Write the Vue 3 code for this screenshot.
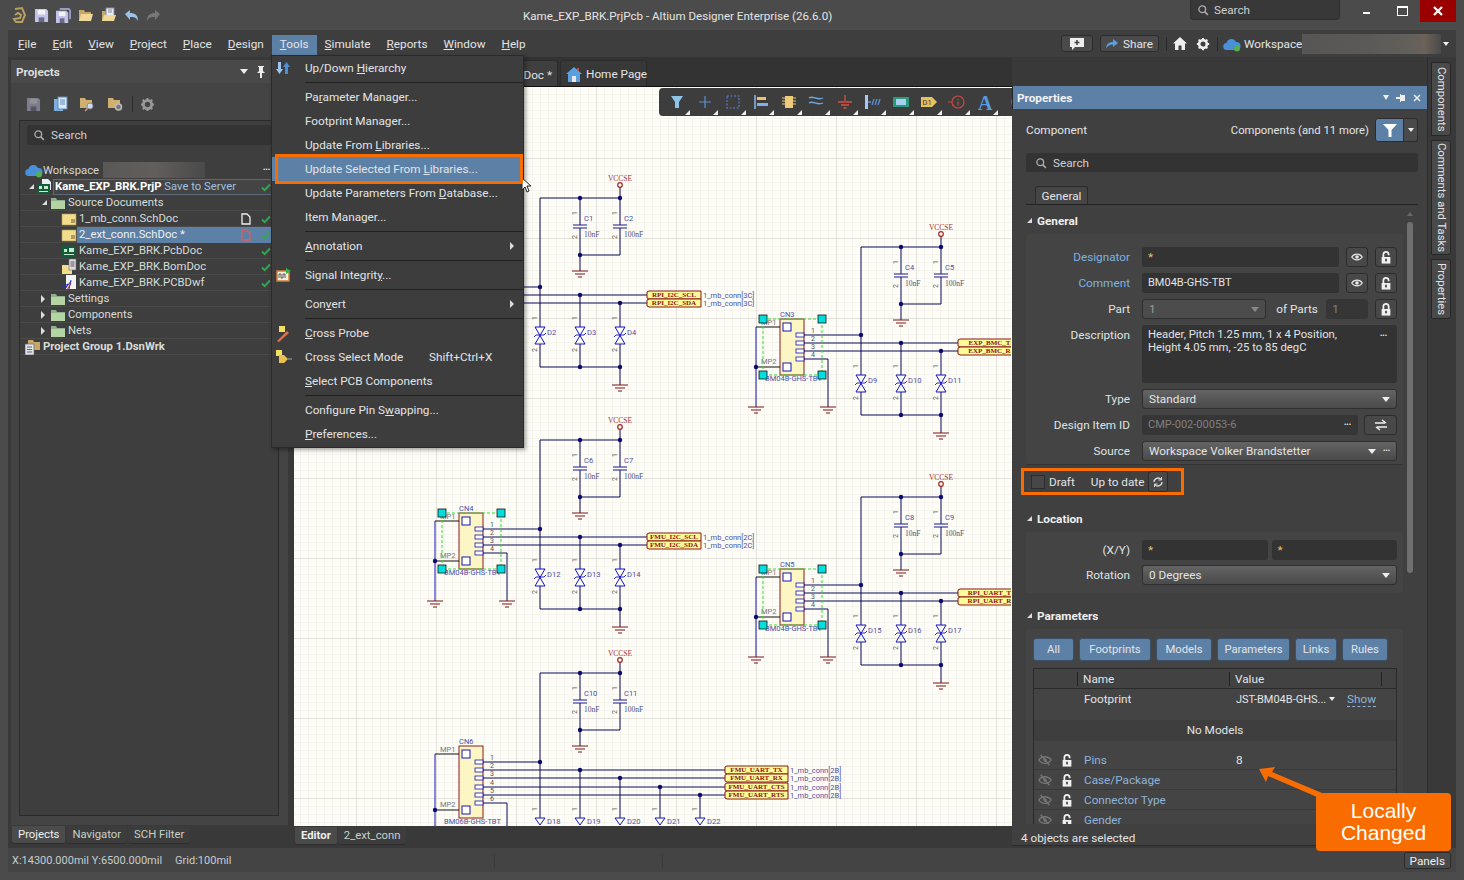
<template>
  <div class="app">
    <!-- shared icons -->
    <svg class="defs" width="0" height="0">
      <symbol id="i-search" viewBox="0 0 16 16"><circle cx="7" cy="7" r="4.5" fill="none" stroke="#aaa" stroke-width="1.8"/><path d="M10.5 10.5l4 4" stroke="#aaa" stroke-width="2"/></symbol>
      <symbol id="i-save" viewBox="0 0 16 16"><path fill="#c3c3ea" d="M1 1h12l2 2v12H1z"/><rect x="4" y="2" width="8" height="5" fill="#f2f2f2"/><rect x="5" y="10" width="6" height="5" fill="#6a6a8c"/></symbol>
      <symbol id="i-save-all" viewBox="0 0 16 16"><path fill="#9a9ac8" d="M4 0h10l2 2v10h-2V2H4z"/><path fill="#c3c3ea" d="M0 3h11l2 2v11H0z"/><rect x="3" y="4" width="7" height="4.500" fill="#f2f2f2"/><rect x="4" y="11" width="5" height="5" fill="#6a6a8c"/></symbol>
      <symbol id="i-folder" viewBox="0 0 16 16"><path fill="#c8a868" d="M1 3h5l1 2h6v9H1z"/><path fill="#f0d898" d="M3 7h12l-2 7H1z"/></symbol>
      <symbol id="i-folder-doc" viewBox="0 0 16 16"><path fill="#c8a868" d="M1 4h4l1 2h1v8H1z"/><rect x="5" y="1" width="8" height="8" fill="#e8eef4" stroke="#889"/><path d="M7 3h4M7 5h4" stroke="#889"/><path fill="#f0d898" d="M3 8h12l-2 6H1z"/></symbol>
      <symbol id="i-folder-green" viewBox="0 0 16 16"><path fill="#8fb088" d="M1 3h5l1 2h8v9H1z"/><rect x="1" y="6" width="14" height="8" fill="#b4d4a4"/></symbol>
      <symbol id="i-group" viewBox="0 0 16 16"><path fill="#c8a868" d="M3 1h5l1 2h6v8H3z"/><rect x="0" y="5" width="9" height="11" fill="#dfe4e8" stroke="#667" stroke-width=".7"/><path d="M2 8h5M2 10.500h5M2 13h5" stroke="#667"/></symbol>
      <symbol id="i-prj" viewBox="0 0 16 16"><path fill="#e8eef4" d="M5 0h6l3 3v8H5z"/><rect x="0" y="5" width="13" height="10" fill="#125c3a"/><path d="M2 7h3v3H2zM7 7h4v3H7zM2 12h9v1H2z" fill="#c8e8d0"/></symbol>
      <symbol id="i-gear" viewBox="0 0 16 16"><circle cx="8" cy="8" r="4.400" fill="none" stroke="currentColor" stroke-width="3"/><path d="M8 1v3M8 12v3M1 8h3M12 8h3M3 3l2 2M11 11l2 2M13 3l-2 2M5 11l-2 2" stroke="currentColor" stroke-width="2.200"/></symbol>
      <symbol id="i-eye" viewBox="0 0 16 16"><path d="M1 8c3-5 11-5 14 0c-3 5-11 5-14 0z" fill="none" stroke="#e8e8e8" stroke-width="1.600"/><circle cx="8" cy="8" r="2.400" fill="#e8e8e8"/></symbol>
      <symbol id="i-eye-off" viewBox="0 0 16 16"><path d="M1 8c3-5 11-5 14 0c-3 5-11 5-14 0z" fill="none" stroke="#777" stroke-width="1.500"/><circle cx="8" cy="8" r="2" fill="#777"/><path d="M3 2l10 12" stroke="#777" stroke-width="1.500"/></symbol>
      <symbol id="i-unlock" viewBox="0 0 16 16"><path d="M5 8V5a3 3 0 0 1 6 0v1" fill="none" stroke="#f0f0f0" stroke-width="2"/><path fill="#f0f0f0" d="M3 8h10v7.500H3z"/><rect x="7" y="10" width="2" height="3" fill="#444"/></symbol>
      <symbol id="i-lock" viewBox="0 0 16 16"><path d="M5 8V5a3 3 0 0 1 6 0v3" fill="none" stroke="#f0f0f0" stroke-width="2"/><path fill="#f0f0f0" d="M3 8h10v7.500H3z"/><rect x="7" y="10" width="2" height="3" fill="#444"/></symbol>
      <symbol id="i-cloud" viewBox="0 0 18 16"><path fill="#4a90d9" d="M4 14a3.500 3.500 0 0 1-.5-7A5 5 0 0 1 13 6a4 4 0 0 1 1 8z"/><circle cx="14" cy="12.500" r="3" fill="#55b04f"/></symbol>
      <symbol id="i-check" viewBox="0 0 10 10"><path d="M1 5.500l2.600 2.600L9 2.500" fill="none" stroke="#2fa84f" stroke-width="2"/></symbol>
      <symbol id="i-sch" viewBox="0 0 16 16"><rect x="1" y="3" width="14" height="11" fill="#f3dc8c" stroke="#b09a5a" stroke-width=".6"/><path d="M10 9h4M10 11h4" stroke="#6a5a2a"/></symbol>
      <symbol id="i-pcb" viewBox="0 0 16 16"><rect x="1" y="3" width="14" height="11" fill="#125c3a"/><path d="M3 6h3v3H3zM8 5h5v4H8zM3 11h10v1H3z" fill="#c8e8d0"/></symbol>
      <symbol id="i-bom" viewBox="0 0 16 16"><rect x="1" y="6" width="10" height="9" fill="#f3dc8c"/><rect x="8" y="0" width="7" height="11" fill="#ddd" stroke="#667" stroke-width=".6"/><path d="M9.500 3h4M9.500 5h4M9.500 7h4" stroke="#556"/></symbol>
      <symbol id="i-dwf" viewBox="0 0 16 16"><rect x="5" y="0" width="10" height="14" fill="#f4f4f4"/><path d="M1 12l6-3-3 5 6-8M8 14l2-9" stroke="#2030c0" fill="none"/><path d="M6 15l4-7" stroke="#d02020"/></symbol>
      <symbol id="i-corner" viewBox="0 0 5 5"><path d="M5 0v5H0z" fill="#eee"/></symbol>
    </svg>

    <!-- title bar -->
    <div class="title-bar">
      <div class="quick">
        <svg class="logo" width="16" height="18" viewBox="0 0 16 18"><path d="M4 3l7-1 3 7-3 7H5l-2-3 6-1 1-3-3-2-3 2" fill="none" stroke="#b8a060" stroke-width="2"/></svg>
        <svg class="qi" width="15" height="15"><use href="#i-save"/></svg>
        <svg class="qi" width="15" height="15"><use href="#i-save-all"/></svg>
        <svg class="qi" width="16" height="16"><use href="#i-folder"/></svg>
        <svg class="qi" width="16" height="16"><use href="#i-folder-doc"/></svg>
        <svg class="qi" width="15" height="13" viewBox="0 0 15 13"><path d="M1 5l5-4v3c5 0 8 2 8 8c-2-4-4-4-8-4v3z" fill="#9cc0e8"/></svg>
        <svg class="qi" width="15" height="13" viewBox="0 0 15 13"><path d="M14 5L9 1v3c-5 0-8 2-8 8c2-4 4-4 8-4v3z" fill="#777"/></svg>
      </div>
      <div class="title">Kame_EXP_BRK.PrjPcb - Altium Designer Enterprise (26.6.0)</div>
      <div class="top-search"><svg width="12" height="12"><use href="#i-search"/></svg><span>Search</span></div>
      <div class="win-btn"><i class="min"></i></div>
      <div class="win-btn"><i class="max"></i></div>
      <div class="win-btn close">
        <svg width="10" height="10" viewBox="0 0 10 10"><path d="M1 1l8 8M9 1l-8 8" stroke="#fff" stroke-width="2.200"/></svg>
      </div>
    </div>

    <!-- menu bar -->
    <div class="menu-bar">
      <span v-for="m in menus" :key="m.b" class="menu-name" :class="{ active: m.a === 'T' }"><u>{{ m.a }}</u>{{ m.b }}</span>
      <div class="menu-right">
        <div class="comment-btn">
          <svg width="16" height="14" viewBox="0 0 16 14"><path fill="#eee" d="M1 1h14v9H6l-3 3v-3H1z"/><path d="M8 3v5M5.500 5.500h5" stroke="#444" stroke-width="1.600"/></svg>
        </div>
        <div class="share-btn">
          <svg width="12" height="10" viewBox="0 0 12 10"><path d="M7 0l5 4-5 4V5.500C4 5.500 2 6.500 0 9c.5-4 3-6 7-6z" fill="#5aa0e0"/></svg>
          <span>Share</span>
        </div>
        <i class="bar-sep"></i>
        <svg class="home" width="14" height="13" viewBox="0 0 14 13"><path fill="#eee" d="M7 0l7 6.500h-2V13H8.500V8.500h-3V13H2V6.500H0z"/></svg>
        <svg class="cog" width="14" height="14"><use href="#i-gear"/></svg>
        <i class="bar-sep sep2"></i>
        <svg class="cloud" width="18" height="16"><use href="#i-cloud"/></svg>
        <span class="ws">Workspace</span>
        <div class="blur-name"></div>
        <i class="caret small"></i>
      </div>
    </div>

    <div class="main">
      <!-- projects panel -->
      <div class="left">
        <div class="panel-head">
          <b>Projects</b>
          <i class="caret"></i>
          <svg width="10" height="12" viewBox="0 0 10 12"><path fill="#eee" d="M2 0h6v1H7v4l2 2H6v5H4V7H1l2-2V1H2z"/></svg>
        </div>
        <div class="panel-body">
          <div class="panel-tools">
            <svg width="15" height="15" style="opacity:.45"><use href="#i-save"/></svg>
            <svg width="16" height="16" viewBox="0 0 16 16"><rect x="2" y="3" width="9" height="12" fill="#7fb0dd"/><rect x="6" y="1" width="9" height="12" fill="#dce8f4" stroke="#5a8abc"/><path d="M8 4h5M8 6h5M8 8h5" stroke="#5a8abc"/></svg>
            <svg width="17" height="16" viewBox="0 0 17 16"><path fill="#d0b070" d="M1 2h5l1 2h6v8H1z"/><circle cx="11" cy="10" r="3" fill="#cde" stroke="#889"/><path d="M9 12l-3 3" stroke="#b98" stroke-width="1.600"/></svg>
            <svg width="17" height="16" viewBox="0 0 17 16"><path fill="#d0b070" d="M1 2h5l1 2h6v8H1z"/><circle cx="11.500" cy="11" r="3" fill="#777" stroke="#bbb" stroke-width="1.500"/></svg>
            <i class="tool-sep"></i>
            <svg class="tool-gear" width="15" height="15"><use href="#i-gear"/></svg>
          </div>
          <div class="tree-box">
            <div class="tree-search">
              <svg width="12" height="12"><use href="#i-search"/></svg><span>Search</span>
            </div>
            <div class="tree">
              <div class="tree-row ws-row">
                <svg width="18" height="16"><use href="#i-cloud"/></svg>
                <span class="ws-text">Workspace</span>
                <div class="blur-name small"></div>
                <span class="more">•••</span>
              </div>
              <div v-for="r in treeRows" :key="r.label" class="tree-row" :style="{ paddingLeft: r.pad + 'px' }">
                <i v-if="r.arrow" class="tree-arrow" :class="r.arrow"></i>
                <svg class="tree-icon" width="16" height="16"><use :href="'#' + r.icon"/></svg>
                <span class="tree-label" :class="{ hl: r.hl, boxed: r.boxed, strong: r.bold }">
                  {{ r.label }}<em v-if="r.boxed"> Save to Server</em>
                  <svg v-if="r.doc" class="doc-mark" width="10" height="12" viewBox="0 0 10 12"><path d="M1 1h5l3 3v7H1z" fill="none" :stroke="r.hl ? '#d86060' : '#eee'" stroke-width="1.300"/></svg>
                  <svg v-if="r.check" class="check" width="10" height="10"><use href="#i-check"/></svg>
                </span>
              </div>
            </div>
          </div>
        </div>
        <div class="bottom-tabs">
          <span class="b-tab on">Projects</span><span class="b-tab">Navigator</span><span class="b-tab">SCH Filter</span>
        </div>
      </div>

      <!-- schematic editor -->
      <div class="editor">
        <div class="doc-tabs">
          <span class="doc-tab">2_ext_conn.SchDoc *</span>
          <span class="doc-tab home-tab">
            <svg width="16" height="15" viewBox="0 0 16 15"><path fill="#5aa0e0" d="M8 0l8 7h-2v8H2V7H0z"/><path fill="#e8e8e8" d="M6 9h4v6H6z"/><path fill="#d05040" d="M11 1h2v3l-2-1.500z"/></svg>
            Home Page
          </span>
        </div>
        <div class="canvas">
          <svg class="sheet" viewBox="294 87 717 739" width="717" height="739">
            <defs>
              <pattern id="minor" x="596" y="158" width="8" height="8" patternUnits="userSpaceOnUse">
                <path d="M0 0V8M0 0H8" stroke="#eeeee6" stroke-width="1" fill="none"/>
              </pattern>
              <pattern id="major" x="596" y="158" width="80" height="80" patternUnits="userSpaceOnUse">
                <path d="M0 0V80M0 0H80" stroke="#dbdbd3" stroke-width="1.400" fill="none"/>
              </pattern>
            </defs>
            <rect x="294" y="87" width="717" height="739" fill="#fdfcf6"/>
            <rect x="294" y="87" width="717" height="739" fill="url(#minor)"/>
            <rect x="294" y="87" width="717" height="739" fill="url(#major)"/>

            <!-- connectors -->
            <g v-for="c in connectors" :key="c.name">
              <rect :x="c.x" :y="c.y" width="24" :height="c.h" fill="#fbf6c4" stroke="#8b1a1a" stroke-width="1"/>
              <rect :x="c.x + 3" :y="c.y + 4" width="8" height="8" fill="#fff" stroke="#1414b4"/>
              <rect :x="c.x + 3" :y="c.y + c.h - 12" width="8" height="8" fill="#fff" stroke="#1414b4"/>
              <rect v-for="p in c.pins" :key="p" :x="c.x + 16" :y="p - 2" width="8" height="4" fill="#fff" stroke="#1414b4" stroke-width=".8"/>
              <text v-for="(p, i) in c.pins" :key="'n' + p" :x="c.x + 31" :y="p - 2" class="t-num">{{ i + 1 }}</text>
              <text :x="c.x" :y="c.y - 2" class="t-name">{{ c.name }}</text>
              <text :x="c.x - 19" :y="c.y + 6" class="t-mp">MP1</text>
              <text :x="c.x - 19" :y="c.y + c.h - 11" class="t-mp">MP2</text>
              <text :x="c.x - 15" :y="c.y + c.h + 6" class="t-name">{{ c.part }}</text>
            </g>

            <line v-for="(w, i) in wires" :key="'w' + i" :x1="w[0]" :y1="w[1]" :x2="w[2]" :y2="w[3]" :stroke="w[4] || '#0a0a5c'" stroke-width="1"/>

            <!-- capacitors -->
            <g v-for="p in plates" :key="p.x + '-' + p.y">
              <path :d="`M${p.x - 7} ${p.y}h14M${p.x - 7} ${p.y + 3}h14`" stroke="#1a1a8c" stroke-width="1.200"/>
            </g>
            <!-- VCC symbols -->
            <g v-for="v in vccs" :key="v.y">
              <circle :cx="v.x" :cy="v.y" r="2.300" fill="none" stroke="#a02828" stroke-width="1.200"/>
              <text :x="v.x" :y="v.y - 4" text-anchor="middle" class="t-vcc">VCCSE</text>
            </g>
            <!-- grounds -->
            <path v-for="g in grounds" :key="g[0] + '-' + g[1]" :d="`M${g[0] - 8} ${g[1]}h16M${g[0] - 5} ${g[1] + 3}h10M${g[0] - 2} ${g[1] + 6}h4`" stroke="#7c1414" stroke-width="1" fill="none"/>
            <!-- TVS diodes -->
            <g v-for="d in diodes" :key="d.name" :transform="`translate(${d.x} ${d.y})`">
              <path v-if="!d.half" d="M-5 0h10L-5 17h10z" fill="none" stroke="#1414c0" stroke-width="1"/>
              <path v-if="!d.half" d="M-6 10l2-2h8l2-2" fill="none" stroke="#1414c0" stroke-width=".9"/>
              <path v-else d="M-5 0h10L0 7z" fill="none" stroke="#1414c0" stroke-width="1"/>
              <text x="7" :y="d.half ? 6 : 8" class="t-name">{{ d.name }}</text>
              <text v-if="!d.half" x="-7" y="-7" class="t-num rot">1</text>
              <text v-if="!d.half" x="-7" y="25" class="t-num rot">2</text>
              <text v-else x="-7" y="-7" class="t-num rot">1</text>
            </g>
            <circle v-for="(d, i) in dots" :key="'d' + i" :cx="d[0]" :cy="d[1]" r="2.200" fill="#0a0a70"/>
            <!-- caps text -->
            <g v-for="t in capTexts" :key="t.name">
              <text :x="t.x + 4" :y="t.y" class="t-name">{{ t.name }}</text>
              <text :x="t.x + 4" :y="t.y + 16" class="t-val">{{ t.val }}</text>
              <text :x="t.x - 7" :y="t.y - 6" class="t-num rot">1</text>
              <text :x="t.x - 7" :y="t.y + 18" class="t-num rot">2</text>
            </g>
            <!-- ports -->
            <g v-for="p in ports" :key="p.text">
              <path :d="`M${p.x} ${p.y + 1}l2 -1h${p.w - 2}v8h-${p.w - 2}l-2 -1z`" fill="#fdfb9a" stroke="#8b1414" stroke-width="1"/>
              <text :x="p.x + p.w / 2" :y="p.y + 6.300" text-anchor="middle" class="t-port">{{ p.text }}</text>
              <text v-if="p.sheet" :x="p.x + p.w + 2" :y="p.y + 6.500" class="t-name">{{ p.sheet }}</text>
            </g>
            <!-- selection handles -->
            <g v-for="c in connectors" :key="'h' + c.name">
              <template v-if="c.selected">
                <rect :x="c.x - 17" :y="c.y" :width="c.h + 3" :height="c.h" fill="none" stroke="#30e030" stroke-width="1" stroke-dasharray="3 2"/>
                <rect v-for="q in handlesOf(c)" :key="q[0] + '-' + q[1]" :x="q[0] - 4" :y="q[1] - 4" width="8" height="8" fill="#00dede" stroke="#111" stroke-width=".8"/>
              </template>
            </g>
          </svg>

          <div class="float-bar">
            <span v-for="(ic, i) in toolIcons" :key="i" class="float-item">
              <svg width="18" height="16" viewBox="0 0 18 16" v-html="ic"></svg>
              <svg class="float-corner" width="5" height="5"><use href="#i-corner"/></svg>
            </span>
          </div>
        </div>
        <div class="bottom-tabs editor-tabs">
          <span class="b-tab on strong">Editor</span><span class="b-tab">2_ext_conn</span>
        </div>
      </div>

      <!-- properties panel -->
      <div class="props">
        <div class="props-head">
          <b>Properties</b>
          <i class="caret"></i>
          <svg width="10" height="8" viewBox="0 0 10 8"><path fill="#eee" d="M0 3h4V0h1v1h4v6H5v1H4V5H0z"/></svg>
          <svg width="8" height="8" viewBox="0 0 8 8"><path d="M1 1l6 6M7 1l-6 6" stroke="#eee" stroke-width="1.500"/></svg>
        </div>
        <div class="props-top">
          <div class="comp-row">
            <span>Component</span>
            <span class="comp-count">Components (and 11 more)</span>
            <div class="filter-btn">
              <svg width="14" height="13" viewBox="0 0 14 13"><path fill="#fff" d="M0 0h14L8.500 6v7h-3V6z"/></svg>
            </div>
            <div class="filter-split"><i class="caret small"></i></div>
          </div>
          <div class="prop-search"><svg width="12" height="12"><use href="#i-search"/></svg><span>Search</span></div>
          <div class="prop-tabs"><span class="prop-tab">General</span></div>
        </div>

        <div class="props-scroll">
          <div class="props-content">
            <div class="sec-head"><i class="sec-arrow"></i>General</div>
            <div class="group general">
              <div class="row">
                <label class="link">Designator</label>
                <div class="ctl">
                  <div class="input grow star">*</div>
                  <div class="sq"><svg width="14" height="12"><use href="#i-eye"/></svg></div>
                  <div class="sq"><svg width="14" height="14"><use href="#i-unlock"/></svg></div>
                </div>
              </div>
              <div class="row">
                <label class="link">Comment</label>
                <div class="ctl">
                  <div class="input grow code">BM04B-GHS-TBT</div>
                  <div class="sq"><svg width="14" height="12"><use href="#i-eye"/></svg></div>
                  <div class="sq"><svg width="14" height="14"><use href="#i-unlock"/></svg></div>
                </div>
              </div>
              <div class="row">
                <label>Part</label>
                <div class="ctl">
                  <div class="select dim part-sel">1<i class="caret gray"></i></div>
                  <span class="of-parts">of Parts</span>
                  <div class="input dim parts-num">1</div>
                  <div class="sq"><svg width="14" height="14"><use href="#i-lock"/></svg></div>
                </div>
              </div>
              <div class="row desc-row">
                <label>Description</label>
                <div class="textarea">
                  <span>Header, Pitch 1.25 mm, 1 x 4 Position,<br>Height 4.05 mm, -25 to 85 degC</span>
                  <span class="more">•••</span>
                </div>
              </div>
              <div class="row">
                <label>Type</label>
                <div class="select">Standard<i class="caret"></i></div>
              </div>
              <div class="row">
                <label>Design Item ID</label>
                <div class="ctl">
                  <div class="input grow dim code">CMP-002-00053-6<span class="more">•••</span></div>
                  <div class="sq wide">
                    <svg width="14" height="12" viewBox="0 0 14 12"><path d="M1 4h10M8 1l4 3M13 8H3M6 11L2 8" stroke="#eee" stroke-width="1.500" fill="none"/></svg>
                  </div>
                </div>
              </div>
              <div class="row">
                <label>Source</label>
                <div class="select">Workspace Volker Brandstetter<i class="caret src-caret"></i><span class="more">•••</span></div>
              </div>
            </div>

            <div class="draft-row">
              <i class="checkbox"></i>
              <span class="draft">Draft</span>
              <span>Up to date</span>
              <div class="sq refresh">
                <svg width="12" height="12" viewBox="0 0 12 12"><path d="M2 6a4 4 0 0 1 7-2.600M10 6a4 4 0 0 1-7 2.600" fill="none" stroke="#ddd" stroke-width="1.300"/><path d="M9.500 1v3h-3M2.500 11V8h3" fill="none" stroke="#ddd"/></svg>
              </div>
            </div>

            <div class="sec-head loc"><i class="sec-arrow"></i>Location</div>
            <div class="group location">
              <div class="row">
                <label>(X/Y)</label>
                <div class="ctl xy"><div class="input grow star">*</div><div class="input grow star">*</div></div>
              </div>
              <div class="row rot-row">
                <label>Rotation</label>
                <div class="select">0 Degrees<i class="caret"></i></div>
              </div>
            </div>

            <div class="sec-head par"><i class="sec-arrow"></i>Parameters</div>
            <div class="group params">
              <div class="chips">
                <span v-for="c in chips" :key="c" class="chip">{{ c }}</span>
              </div>
              <div class="table">
                <div class="t-row t-head"><span></span><span>Name</span><span>Value</span><span></span></div>
                <div class="t-row"><span></span><span>Footprint</span>
                  <span class="fp">JST-BM04B-GHS...<i class="caret small"></i></span>
                  <span></span>
                </div>
                <a class="show">Show</a>
                <div class="no-models">No Models</div>
                <div v-for="p in paramRows" :key="p.name" class="t-row p-row">
                  <span class="p-icons"><svg width="14" height="14"><use href="#i-eye-off"/></svg><svg width="14" height="14"><use href="#i-unlock"/></svg></span>
                  <span class="p-name">{{ p.name }}</span>
                  <span>{{ p.value }}</span>
                  <span></span>
                </div>
              </div>
            </div>
          </div>
          <div class="scroll-col">
            <i class="scroll-up"></i>
            <i class="thumb"></i>
          </div>
        </div>
        <div class="props-foot">4 objects are selected</div>
      </div>

      <!-- right side tabs -->
      <div class="rail">
        <span class="rail-tab comp">Components</span>
        <span class="rail-tab tasks">Comments and Tasks</span>
        <span class="rail-tab prop">Properties</span>
      </div>
    </div>

    <!-- status bar -->
    <div class="status">
      <span>X:14300.000mil Y:6500.000mil</span>
      <span class="grid">Grid:100mil</span>
      <i class="st-sep s1"></i>
      <i class="st-sep s2"></i>
      <span class="panels">Panels</span>
    </div>

    <!-- Tools dropdown -->
    <div class="dropdown">
      <template v-for="(m, i) in toolMenu" :key="i">
        <div v-if="m.sep" class="dd-sep"></div>
        <div v-else class="dd-item" :class="{ picked: m.picked }">
          <span class="dd-icon" v-if="m.icon" v-html="m.icon"></span>
          <span class="dd-text">{{ m.a }}<u>{{ m.u }}</u>{{ m.b }}</span>
          <span v-if="m.key" class="dd-key">{{ m.key }}</span>
          <i v-if="m.sub" class="dd-sub"></i>
        </div>
      </template>
    </div>

    <!-- mouse pointer over the menu edge -->
    <svg class="pointer" width="12" height="17" viewBox="0 0 12 17"><path d="M1 1v12l3-3 2 5 2-1-2-5h4z" fill="#fff" stroke="#222" stroke-width="1"/></svg>

    <!-- annotation -->
    <svg class="note-arrow" width="70" height="34" viewBox="1258 765 70 34"><path fill="#f96d00" d="M1259 769l16-2-3 5 50 21-5 4-49-21-2 6z"/></svg>
    <div class="callout">Locally<br>Changed</div>
  </div>
</template>

<script setup>
const menus = [
  { a: 'F', b: 'ile' }, { a: 'E', b: 'dit' }, { a: 'V', b: 'iew' }, { a: 'P', b: 'roject' },
  { a: 'P', b: 'lace' }, { a: 'D', b: 'esign' }, { a: 'T', b: 'ools' }, { a: 'S', b: 'imulate' },
  { a: 'R', b: 'eports' }, { a: 'W', b: 'indow' }, { a: 'H', b: 'elp' }
]

const treeRows = [
  { label: 'Kame_EXP_BRK.PrjP', pad: 7, arrow: 'open', icon: 'i-prj', boxed: true, bold: true, check: true },
  { label: 'Source Documents', pad: 20, arrow: 'open', icon: 'i-folder-green' },
  { label: '1_mb_conn.SchDoc', pad: 41, icon: 'i-sch', check: true, doc: true },
  { label: '2_ext_conn.SchDoc *', pad: 41, icon: 'i-sch', check: true, doc: true, hl: true },
  { label: 'Kame_EXP_BRK.PcbDoc', pad: 41, icon: 'i-pcb', check: true },
  { label: 'Kame_EXP_BRK.BomDoc', pad: 41, icon: 'i-bom', check: true },
  { label: 'Kame_EXP_BRK.PCBDwf', pad: 41, icon: 'i-dwf', check: true },
  { label: 'Settings', pad: 20, arrow: 'closed', icon: 'i-folder-green' },
  { label: 'Components', pad: 20, arrow: 'closed', icon: 'i-folder-green' },
  { label: 'Nets', pad: 20, arrow: 'closed', icon: 'i-folder-green' },
  { label: 'Project Group 1.DsnWrk', pad: 5, icon: 'i-group', bold: true }
]

const toolMenu = [
  { a: 'Up/Down ', u: 'H', b: 'ierarchy', icon: '<svg width="14" height="14" viewBox="0 0 14 14"><path fill="#9cc4ee" d="M2 1h3v7h2L3.500 13 0 8h2z"/><path fill="#4a90d9" d="M9 13h3V6h2L10.500 1 7 6h2z"/></svg>' },
  { sep: true },
  { a: 'Pa', u: 'r', b: 'ameter Manager...' },
  { a: 'Footprint Manager...' },
  { a: 'Update From ', u: 'L', b: 'ibraries...' },
  { a: 'Update Selected From ', u: 'L', b: 'ibraries...', picked: true },
  { a: 'Update Parameters From ', u: 'D', b: 'atabase...' },
  { a: 'Item Manager...' },
  { sep: true },
  { a: '', u: 'A', b: 'nnotation', sub: true },
  { sep: true },
  { a: 'Signal Integrit', u: 'y', b: '...', icon: '<svg width="16" height="14" viewBox="0 0 16 14"><rect x="1" y="3" width="12" height="10" fill="#f4f0e0" stroke="#d08030" stroke-width="1.500"/><path d="M3 10V6h2v4h2V6h2v4" stroke="#555" fill="none"/><path fill="#30b040" d="M10 0l5 3-5 3z"/></svg>' },
  { sep: true },
  { a: 'Con', u: 'v', b: 'ert', sub: true },
  { sep: true },
  { a: '', u: 'C', b: 'ross Probe', icon: '<svg width="14" height="16" viewBox="0 0 14 16"><rect x="3" y="0" width="6" height="6" fill="#f4e060"/><path d="M1 15l10-10 2 2L3 16z" fill="#d87050"/></svg>' },
  { a: 'Cross Select Mode', key: 'Shift+Ctrl+X', icon: '<svg width="16" height="14" viewBox="0 0 16 14"><rect x="0" y="0" width="6" height="6" fill="#f4e060"/><path d="M3 5h5l4 4-4 4H3z" fill="#eac050"/><path d="M12 9h4" stroke="#aaa"/></svg>' },
  { a: '', u: 'S', b: 'elect PCB Components' },
  { sep: true },
  { a: 'Configure Pin S', u: 'w', b: 'apping...' },
  { a: '', u: 'P', b: 'references...' }
]

const chips = ['All', 'Footprints', 'Models', 'Parameters', 'Links', 'Rules']
const paramRows = [
  { name: 'Pins', value: '8' },
  { name: 'Case/Package', value: '' },
  { name: 'Connector Type', value: '' },
  { name: 'Gender', value: '' }
]

const toolIcons = [
  '<path fill="#8fc4e8" d="M3 2h12L11 8v6H7V8z"/>',
  '<path d="M9 2v12M3 8h12" stroke="#5a90d8" stroke-width="1.200"/>',
  '<rect x="3" y="2" width="12" height="12" fill="none" stroke="#5a7cd0" stroke-width="1.200" stroke-dasharray="2 1.500"/>',
  '<path d="M3 1v14" stroke="#8fb8e8" stroke-width="1.500"/><rect x="5" y="3" width="9" height="3" fill="#f0c070"/><rect x="5" y="9" width="11" height="3" fill="#7fb0e8"/>',
  '<rect x="5" y="2" width="8" height="12" fill="#eecb7a"/><path d="M2 4h3M2 7h3M2 10h3M13 4h3M13 7h3M13 10h3" stroke="#eecb7a"/>',
  '<path d="M1 4c4-3 8 3 14 0M1 9c4-3 8 3 14 0" stroke="#6ea8e0" fill="none" stroke-width="1.300"/>',
  '<path d="M9 1v6M2 8h14M5 11h8M7.500 14h3" stroke="#d85040" stroke-width="1.300"/>',
  '<rect x="1" y="1" width="3" height="14" fill="#a8c8f0"/><path d="M4 8h3M8 11l2-6M11 11l2-6M14 11l2-6" stroke="#5a90d8" stroke-width="1.300"/>',
  '<rect x="1" y="3" width="16" height="10" fill="#2a9a7a"/><rect x="4" y="5" width="10" height="6" fill="#a8d0f0"/>',
  '<path fill="#e8c060" d="M1 3h11l5 5-5 5H1z"/><text x="2.500" y="11" font-size="7.500" font-family="Roboto" fill="#333">D1</text>',
  '<circle cx="10" cy="8" r="6" fill="none" stroke="#c84a40" stroke-width="1.200"/><path d="M10 5v1M10 7.500v4M0 8h4" stroke="#c84a40" stroke-width="1.200"/>',
  '<text x="2" y="16" font-size="20" font-family="Liberation Serif" font-weight="700" fill="#5a9ae0">A</text>',
  '<path d="M14 2c-4 0-6 3-6 6s2 6 6 6" stroke="#4a8ac8" fill="none" stroke-width="1.500"/>'
]

// schematic geometry, all coordinates are page pixels
const wires = []
const dots = []
const grounds = []
const plates = []
const vccs = []
const diodes = []
const capTexts = []

function capGroup (x, top, c1, c2) {
  const a = x + 40
  const b = x + 80
  wires.push([x, top, b, top], [a, top, a, top + 27], [b, top, b, top + 27])
  wires.push([a, top + 30, a, top + 73], [b, top + 30, b, top + 57], [a, top + 57, b, top + 57])
  wires.push([b, top - 11, b, top])
  dots.push([a, top], [b, top], [a, top + 57])
  plates.push({ x: a, y: top + 27 }, { x: b, y: top + 27 })
  grounds.push([a, top + 73])
  vccs.push({ x: b, y: top - 13 })
  capTexts.push({ name: c1, val: '10nF', x: a, y: top + 23 }, { name: c2, val: '100nF', x: b, y: top + 23 })
}

function tvsRow (x, pin, names) {
  names.forEach((name, i) => diodes.push({ name, x: x + i * 40, y: pin + 40 }))
  wires.push([x + 40, pin + 8, x + 40, pin + 40], [x + 80, pin + 16, x + 80, pin + 40])
  names.forEach((n, i) => wires.push([x + i * 40, pin + 57, x + i * 40, pin + 80]))
  wires.push([x, pin + 80, x + 80, pin + 80], [x + 80, pin + 80, x + 80, pin + 98])
  dots.push([x, pin], [x + 40, pin + 8], [x + 80, pin + 16], [x + 40, pin + 80], [x + 80, pin + 80])
  grounds.push([x + 80, pin + 98])
}

function connector (x, y, name, part, count, selected) {
  const h = count === 6 ? 72 : 56
  const pins = Array.from({ length: count }, (_, i) => y + 16 + i * 8 + (i > 2 && count === 6 ? 1 : 0))
  const lx = x - 24
  const last = pins[count - 1]
  const bottom = count === 6 ? 860 : y + 88
  wires.push([lx, y + 8, x, y + 8, '#111'], [lx, y + h - 8, x, y + h - 8, '#111'])
  wires.push([lx, y + 8, lx, bottom, '#1414c0'])
  wires.push([x + 24, last, x + 48, last], [x + 48, last, x + 48, bottom])
  dots.push([lx, y + h - 8])
  if (count === 4) grounds.push([lx, bottom], [x + 48, bottom])
  return { x, y, h, name, part, pins, selected }
}

const connectors = [
  connector(780, 319, 'CN3', 'BM04B-GHS-TBT', 4, true),
  connector(459, 513, 'CN4', 'BM04B-GHS-TBT', 4, true),
  connector(780, 569, 'CN5', 'BM04B-GHS-TBT', 4, true),
  connector(459, 746, 'CN6', 'BM06B-GHS-TBT', 6, false)
]

const handlesOf = (c) => [
  [c.x - 17, c.y], [c.x + 42, c.y], [c.x - 17, c.y + c.h], [c.x + 42, c.y + c.h]
]

capGroup(540, 198, 'C1', 'C2')
capGroup(861, 247, 'C4', 'C5')
capGroup(540, 440, 'C6', 'C7')
capGroup(861, 497, 'C8', 'C9')
capGroup(540, 673, 'C10', 'C11')

tvsRow(540, 287, ['D2', 'D3', 'D4'])
tvsRow(861, 335, ['D9', 'D10', 'D11'])
tvsRow(540, 529, ['D12', 'D13', 'D14'])
tvsRow(861, 585, ['D15', 'D16', 'D17'])

// long rails from each cap group down to its first diode
wires.push([540, 198, 540, 327], [861, 247, 861, 375], [540, 440, 540, 569], [861, 497, 861, 625], [540, 673, 540, 818])
// nets of the hidden connector and of the three visible ones
wires.push([500, 287, 540, 287], [500, 295, 647, 295], [500, 303, 647, 303])
wires.push([804, 335, 861, 335], [804, 343, 960, 343], [804, 351, 960, 351])
wires.push([483, 529, 540, 529], [483, 537, 647, 537], [483, 545, 647, 545])
wires.push([804, 585, 861, 585], [804, 593, 960, 593], [804, 601, 960, 601])
wires.push([483, 762, 540, 762], [483, 770, 725, 770], [483, 778, 725, 778], [483, 787, 725, 787], [483, 795, 725, 795])
;[[580, 770], [620, 778], [660, 787], [700, 795]].forEach(([x, y]) => {
  wires.push([x, y, x, 818])
  dots.push([x, y])
})
dots.push([540, 762])
;['D18', 'D19', 'D20', 'D21', 'D22'].forEach((name, i) => diodes.push({ name, x: 540 + i * 40, y: 818, half: true }))

const ports = [
  { x: 647, y: 291, w: 54, text: 'RPI_I2C_SCL', sheet: '1_mb_conn[3C]' },
  { x: 647, y: 299, w: 54, text: 'RPI_I2C_SDA', sheet: '1_mb_conn[3C]' },
  { x: 958, y: 339, w: 68, text: 'EXP_BMC_TX' },
  { x: 958, y: 347, w: 68, text: 'EXP_BMC_RX' },
  { x: 647, y: 533, w: 54, text: 'FMU_I2C_SCL', sheet: '1_mb_conn[2C]' },
  { x: 647, y: 541, w: 54, text: 'FMU_I2C_SDA', sheet: '1_mb_conn[2C]' },
  { x: 958, y: 589, w: 68, text: 'RPI_UART_TX' },
  { x: 958, y: 597, w: 68, text: 'RPI_UART_RX' },
  { x: 725, y: 766, w: 63, text: 'FMU_UART_TX', sheet: '1_mb_conn[2B]' },
  { x: 725, y: 774, w: 63, text: 'FMU_UART_RX', sheet: '1_mb_conn[2B]' },
  { x: 725, y: 783, w: 63, text: 'FMU_UART_CTS', sheet: '1_mb_conn[2B]' },
  { x: 725, y: 791, w: 63, text: 'FMU_UART_RTS', sheet: '1_mb_conn[2B]' }
]
</script>

<style>
html, body { margin: 0; background: #4b4b4b; }
</style>

<style scoped>
.app {
  position: relative;
  width: 1464px;
  height: 880px;
  overflow: hidden;
  display: flex;
  flex-direction: column;
  background: #4b4b4b;
  color: #e2e4e6;
  font: 11.75px Roboto, "Liberation Sans", sans-serif;
}
.defs { position: absolute; }
i { display: block; font-style: normal; }
u { text-underline-offset: 1px; }

.caret {
  width: 0;
  height: 0;
  border-left: 4px solid transparent;
  border-right: 4px solid transparent;
  border-top: 5px solid #eee;
}
.caret.small { border-left-width: 3px; border-right-width: 3px; border-top-width: 4px; }
.caret.gray { border-top-color: #888; }
.more { font-size: 7px; letter-spacing: 0; color: #eee; }

/* title bar */
.title-bar { height: 30px; display: flex; align-items: flex-start; flex: none; }
.quick { width: 523px; height: 30px; display: flex; align-items: center; flex: none; }
.logo { margin-left: 11px; }
.qi { margin-left: 7px; }
.title { margin-top: 9px; width: 667px; font-size: 11.6px; color: #e4e4e4; white-space: nowrap; }
.top-search {
  width: 150px;
  height: 20px;
  box-sizing: border-box;
  padding-left: 6px;
  display: flex;
  align-items: center;
  gap: 5px;
  background: #383838;
  border: 1px solid #2f2f2f;
  border-top: 0;
  border-radius: 0 0 4px 4px;
  margin-right: 8px;
  color: #cfcfcf;
}
.win-btn { width: 36px; height: 22px; display: flex; align-items: center; justify-content: center; }
.win-btn.close { background: #9a0000; margin-right: 8px; }
.min { width: 7px; height: 2px; background: #fff; margin-top: 4px; }
.max { width: 9px; height: 7px; border: 1px solid #fff; border-top-width: 2px; }

/* menu bar */
.menu-bar {
  height: 27px;
  flex: none;
  margin: 0 8px;
  padding-left: 10px;
  display: flex;
  align-items: center;
  gap: 16px;
  background: #3e3e3e;
  box-sizing: border-box;
}
.menu-name { white-space: nowrap; }
.menu-name.active {
  background: #5d80a6;
  padding: 0 8px;
  margin: 0 -8px;
  line-height: 18px;
  align-self: flex-end;
  height: 22px;
}
.menu-right { margin-left: auto; padding-right: 7px; display: flex; align-items: center; gap: 0; }
.comment-btn, .share-btn {
  height: 17px;
  box-sizing: border-box;
  border: 1px solid #2c2c2c;
  border-radius: 3px;
  background: #4a4a4a;
  display: flex;
  align-items: center;
  justify-content: center;
}
.comment-btn { width: 32px; }
.share-btn { width: 59px; margin-left: 7px; gap: 5px; }
.bar-sep { width: 1px; height: 14px; background: #2a2a2a; margin-left: 7px; }
.home { margin-left: 6px; }
.cog { margin-left: 9px; color: #eee; }
.sep2 { margin-left: 7px; }
.cloud { margin-left: 5px; }
.ws { margin-left: 3px; width: 58px; }
.blur-name {
  width: 139px;
  height: 20px;
  margin-right: 2px;
  background: linear-gradient(90deg, #585654, #5c5a58 50%, #64605a 80%, #6c6258 88%, #4a4a4a);
}

/* layout */
.main { flex: 1; min-height: 0; margin: 0 8px; display: flex; background: #393939; }

/* projects panel */
.left { width: 277px; margin: 3px 6px 0 3px; flex: none; display: flex; flex-direction: column; min-height: 0; }
.panel-head {
  height: 23px;
  flex: none;
  background: #494949;
  display: flex;
  align-items: center;
  padding: 0 22px 0 5px;
  gap: 8px;
  line-height: 20px;
}
.panel-head b { flex: 1; font-weight: 700; color: #ddd; }
.panel-body { flex: 1; min-height: 0; background: #444; padding: 0 9px 9px 8px; display: flex; flex-direction: column; }
.panel-tools {
  height: 37px;
  flex: none;
  display: flex;
  align-items: center;
  padding: 5px 0 0 7px;
  gap: 11px;
  box-sizing: border-box;
}
.tool-sep { width: 1px; height: 16px; background: #2a2a2a; margin: 0 -4px 0 -3px; }
.tool-gear { color: #999; }
.tree-box { flex: 1; border: 1px solid #2a2a2a; background: #3e3e3e; padding-top: 4px; }
.tree-search {
  margin-left: 7px;
  height: 20px;
  background: #333;
  border-radius: 3px;
  display: flex;
  align-items: center;
  padding-left: 6px;
  gap: 6px;
  color: #cfcfcf;
}
.tree { margin-top: 17px; font-size: 11.3px; }
.tree-row {
  height: 16px;
  display: flex;
  align-items: center;
  box-sizing: border-box;
  border-bottom: 1px solid #4a4a4a;
  white-space: nowrap;
}
.ws-row { padding-left: 5px; border: 0; margin-bottom: 1px; }
.ws-text { width: 60px; color: #d6d6d6; }
.blur-name.small { width: 102px; height: 16px; background: linear-gradient(90deg, #5a5856, #625e5c 50%, #4a4a4a); margin: 0; }
.ws-row .more { margin-left: 58px; }
.tree-arrow { width: 10px; flex: none; height: 6px; position: relative; }
.tree-arrow.open::after {
  content: '';
  position: absolute;
  left: 2px;
  top: 0;
  border-bottom: 5px solid #ddd;
  border-left: 5px solid transparent;
}
.tree-arrow.closed::after {
  content: '';
  position: absolute;
  left: 1px;
  top: -1px;
  border-left: 4px solid #ddd;
  border-top: 4px solid transparent;
  border-bottom: 4px solid transparent;
}
.tree-icon { flex: none; }
.tree-label {
  flex: 1;
  height: 16px;
  line-height: 15px;
  padding-left: 2px;
  display: flex;
  align-items: center;
  color: #d8dcd8;
  min-width: 0;
  white-space: pre;
}
.tree-label.strong { font-weight: 700; }
.tree-label.hl { background: #5d80a6; color: #f0f0f0; }
.tree-label.boxed { outline: 1px solid #5a6a7a; outline-offset: -1px; background: #444; color: #fff; }
.tree-label em { font-style: normal; font-weight: 400; color: #9cc0e0; }
.doc-mark { position: absolute; left: 241px; }
.check { position: absolute; left: 261px; }

.bottom-tabs { height: 23px; flex: none; display: flex; gap: 1px; margin-left: 1px; box-sizing: border-box; padding-top: 1px; font-size: 11.3px; }
.b-tab {
  height: 17px;
  padding: 0 6px;
  line-height: 17px;
  background: #3c3c3c;
  border: 1px solid #2d2d2d;
  border-top: 0;
  border-radius: 0 0 3px 3px;
  color: #c8d0c8;
  box-sizing: content-box;
  border-width: 0 0 1px;
}
.b-tab.on { background: #4b4b4b; color: #f0f0f0; }
.b-tab.strong { font-weight: 700; }

/* editor */
.editor { width: 718px; flex: none; display: flex; flex-direction: column; min-height: 0; }
.doc-tabs { height: 30px; flex: none; display: flex; align-items: flex-start; background: #333; gap: 1px; padding-left: 120px; box-sizing: border-box; }
.doc-tab {
  height: 27px;
  margin-top: 3px;
  padding: 0 5px;
  line-height: 28px;
  background: #3f3f3f;
  border: 1px solid #2c2c2c;
  border-bottom: 0;
  border-radius: 3px 3px 0 0;
  width: 144px;
  box-sizing: border-box;
  text-align: right;
  white-space: nowrap;
}
.home-tab {
  width: 87px;
  margin-left: 1px;
  display: flex;
  align-items: center;
  gap: 4px;
  background: #383838;
}
.home-tab svg { flex: none; }
.canvas { position: relative; height: 739px; flex: none; overflow: hidden; background: #fdfcf6; border-top: 1px solid #111; margin-top: -1px; }
.sheet { display: block; }
.float-bar {
  position: absolute;
  left: 365px;
  top: 1px;
  width: 360px;
  height: 28px;
  padding-left: 4px;
  display: flex;
  background: #3d3d3d;
  border-radius: 4px;
  box-sizing: border-box;
}
.float-item { position: relative; width: 28px; flex: none; display: flex; align-items: center; justify-content: center; }
.float-corner { position: absolute; right: 1px; bottom: 1px; }
.t-name { font: 7.5px Roboto, sans-serif; fill: #4f4fa6; }
.t-val { font: 7.5px "Liberation Serif", serif; fill: #50507a; }
.t-num { font: 7px Roboto, sans-serif; fill: #555; }
.t-num.rot { transform-box: fill-box; transform-origin: center; transform: rotate(-90deg); fill: #666; }
.t-mp { font: 7.5px Roboto, sans-serif; fill: #777; }
.t-vcc { font: 7.5px "Liberation Serif", serif; fill: #a83232; }
.t-port { font: 700 7px "Liberation Serif", serif; fill: #8b1414; }
.editor-tabs { margin-left: 1px; height: 22px; }
.editor-tabs .b-tab { background: #3d3d3d; }
.editor-tabs .b-tab.on { background: #4a4a4a; }

/* properties */
.props {
  width: 415px;
  flex: none;
  margin-top: 29px;
  margin-bottom: 2px;
  background: #404040;
  display: flex;
  flex-direction: column;
  min-height: 0;
  box-sizing: border-box;
  border-bottom: 1px solid #2b2b2b;
  position: relative;
}
.props-head {
  height: 23px;
  flex: none;
  background: #5d80a6;
  display: flex;
  align-items: center;
  padding: 0 6px 0 4px;
  gap: 7px;
  border-left: 1px solid #222;
  box-sizing: border-box;
}
.props-head b { flex: 1; font-weight: 700; color: #f2f2f2; }
.props-head .caret { border-left-width: 3.5px; border-right-width: 3.5px; border-top-width: 5px; }
.props-top { padding: 9px 9px 0 14px; flex: none; }
.comp-row { height: 24px; display: flex; align-items: center; }
.comp-count { margin-left: auto; margin-right: 6px; font-size: 11.3px; }
.filter-btn {
  width: 29px;
  height: 24px;
  display: flex;
  align-items: center;
  justify-content: center;
  background: #5d80a6;
  border: 1px solid #2c2c2c;
  box-sizing: border-box;
  border-radius: 3px 0 0 3px;
}
.filter-split {
  width: 14px;
  height: 24px;
  box-sizing: border-box;
  display: flex;
  align-items: center;
  justify-content: center;
  background: #4a4a4a;
  border: 1px solid #2c2c2c;
  border-left: 0;
  border-radius: 0 3px 3px 0;
}
.prop-search {
  margin-top: 11px;
  height: 19px;
  background: #333;
  border-radius: 3px;
  display: flex;
  align-items: center;
  padding-left: 9px;
  gap: 6px;
  color: #cfcfcf;
}
.prop-tabs { margin-top: 14px; height: 19px; border-bottom: 1px solid #222; padding-left: 9px; box-sizing: border-box; }
.prop-tab {
  display: block;
  width: 53px;
  height: 18px;
  line-height: 19px;
  text-align: center;
  border: 1px solid #2c2c2c;
  border-bottom: 0;
  border-radius: 3px 3px 0 0;
  box-sizing: border-box;
  background: #454545;
}
.props-scroll { flex: 1; min-height: 0; display: flex; overflow: hidden; padding-left: 9px; }
.props-content { width: 382px; padding-left: 5px; box-sizing: border-box; flex: none; overflow: hidden; }
.sec-head { margin-top: 8px; height: 16px; line-height: 16px; font-weight: 700; padding-left: 11px; position: relative; color: #eee; }
.sec-arrow {
  position: absolute;
  left: 1px;
  top: 5px;
  border-bottom: 5px solid #ddd;
  border-left: 5px solid transparent;
}
.sec-head.loc { margin-top: 16px; }
.sec-head.par { margin-top: 15px; }
.group { background: #444; margin-top: 5px; padding: 13px 6px 5px 0; border-radius: 2px; }
.row { display: grid; grid-template-columns: 104px 255px; column-gap: 12px; min-height: 20px; align-items: center; margin-bottom: 6px; }
.row:last-child { margin-bottom: 0; }
.row label { text-align: right; color: #dfe3e3; }
.row label.link { color: #7eb2e0; }
.general { border-bottom: 1px solid #333; height: 231px; box-sizing: border-box; }
.ctl { display: flex; align-items: center; gap: 7px; }
.ctl.xy { gap: 4px; }
.input {
  height: 20px;
  background: #333;
  border-radius: 3px;
  padding-left: 6px;
  line-height: 20px;
  box-sizing: border-box;
  display: flex;
  align-items: center;
  white-space: nowrap;
}
.input.code { font-size: 11px; }
.grow { flex: 1; min-width: 0; }
.input.star { color: #e8c070; }
.input.dim { color: #808080; background: #363636; }
.input.dim .more { margin-left: auto; margin-right: 7px; }
.sq {
  width: 22px;
  height: 20px;
  flex: none;
  box-sizing: border-box;
  border: 1px solid #2c2c2c;
  border-radius: 3px;
  background: #484848;
  display: flex;
  align-items: center;
  justify-content: center;
}
.sq.wide { width: 33px; margin-left: -1px; }
.select {
  height: 20px;
  box-sizing: border-box;
  padding: 0 6px;
  border: 1px solid #2f2f2f;
  border-radius: 3px;
  background: linear-gradient(#646464, #4a4a4a);
  display: flex;
  align-items: center;
  white-space: nowrap;
}
.select .caret { margin-left: auto; }
.select.dim { color: #9a9aa0; background: #4c4c4c; }
.part-sel { width: 125px; }
.of-parts { width: 53px; text-align: center; margin-left: -2px; margin-right: -4px; }
.parts-num { width: 42px; }
.src-caret { margin-right: 7px; }
.desc-row { align-items: start; }
.desc-row label { padding-top: 3px; }
.textarea {
  height: 58px;
  background: #333;
  border-radius: 3px;
  padding: 3px 6px;
  line-height: 13px;
  font-size: 11.3px;
  box-sizing: border-box;
  display: flex;
  justify-content: space-between;
}
.textarea .more { margin-top: 2px; margin-right: 4px; }
.draft-row {
  margin: 3px 0 0 -5px;
  width: 163px;
  height: 27px;
  box-sizing: border-box;
  border: 3px solid #f96d00;
  display: flex;
  align-items: center;
  white-space: nowrap;
}
.checkbox { width: 12px; height: 12px; margin-left: 7px; border: 1px solid #2c2c2c; background: #474747; }
.draft { margin: 0 16px 0 4px; }
.refresh { margin-left: 4px; width: 20px; height: 21px; }
.location { padding-top: 8px; padding-bottom: 8px; }
.rot-row { margin-top: -1px; }
.params { padding: 9px 6px 0 7px; }
.chips { display: grid; grid-template-columns: 41px 72px 56px 73px 42px 46px; gap: 5px; font-size: 11.3px; }
.chip {
  height: 23px;
  line-height: 22px;
  text-align: center;
  background: #5d80a6;
  border: 1px solid #3a5068;
  border-radius: 3px;
  box-sizing: border-box;
}
.table { margin-top: 7px; border: 1px solid #2a2a2a; position: relative; }
.t-row { display: grid; grid-template-columns: 44px 152px 152px 1fr; height: 20px; align-items: center; }
.t-row > span { padding-left: 6px; white-space: nowrap; }
.t-head { background: #424242; border-bottom: 1px solid #2a2a2a; box-sizing: border-box; }
.t-head > span { border-right: 1px solid #222; padding-left: 5px; line-height: 14px; height: 14px; }
.t-head > span:last-child { border: 0; }
.fp { display: flex; align-items: center; gap: 3px; font-size: 11px; }
.show { position: absolute; right: 20px; top: 24px; color: #8fb4d8; border-bottom: 1px dashed #8fb4d8; line-height: 13px; }
.no-models { margin: 11px 0 9px; height: 21px; line-height: 21px; text-align: center; background: #3e3e3e; }
.p-row { border-bottom: 1px solid #3a3a3a; box-sizing: border-box; }
.p-icons { display: flex; gap: 8px; padding-left: 4px !important; }
.p-name { color: #8fb4d8; }
.scroll-col { width: 22px; flex: none; position: relative; }
.scroll-up {
  position: absolute;
  left: 4px;
  top: 7px;
  border-left: 3px solid transparent;
  border-right: 3px solid transparent;
  border-bottom: 4px solid #666;
}
.thumb {
  position: absolute;
  left: 4px;
  top: 17px;
  width: 6px;
  height: 351px;
  border-radius: 3px;
  background: #6f6f6f;
}
.props-foot { height: 21px; flex: none; line-height: 28px; padding-left: 9px; background: #404040; }

/* right rail */
.rail { width: 29px; flex: none; border-left: 1px solid #2c2c2c; box-sizing: border-box; padding: 5px 0 0 3px; display: flex; flex-direction: column; gap: 4px; }
.rail-tab {
  writing-mode: vertical-rl;
  width: 20px;
  box-sizing: border-box;
  line-height: 18px;
  text-align: center;
  border: 1px solid #262626;
  border-radius: 0 3px 3px 0;
  background: #4a4a4a;
  white-space: nowrap;
  font-size: 11.3px;
}
.comp { height: 74px; }
.tasks { height: 115px; }
.prop { height: 60px; }

/* status bar */
.status {
  height: 24px;
  flex: none;
  margin: 0 8px 8px;
  padding: 1px 0 0 4px;
  box-sizing: border-box;
  background: #444;
  display: flex;
  align-items: center;
  color: #c4ccd2;
  font-size: 11px;
  position: relative;
}
.grid { margin-left: 13px; }
.st-sep { width: 1px; height: 14px; background: #3a3a3a; margin-left: 263px; }
.st-sep.s2 { margin-left: 167px; }
.panels {
  margin-left: auto;
  margin-right: 5px;
  height: 17px;
  line-height: 16px;
  padding: 0 5px;
  background: #4a4a4a;
  border: 1px solid #2c2c2c;
  border-radius: 3px;
  box-sizing: border-box;
  color: #eee;
  font-size: 11.75px;
}

/* Tools dropdown */
.dropdown {
  position: absolute;
  left: 271px;
  top: 55px;
  width: 253px;
  height: 393px;
  box-sizing: border-box;
  background: #3d3d3d;
  border: 1px solid #2a2a2a;
  box-shadow: 2px 2px 4px rgba(0, 0, 0, .35);
}
.dd-item { height: 24px; display: flex; align-items: center; position: relative; padding-left: 33px; white-space: nowrap; }
.dd-item.picked {
  background: #5d80a6;
  margin: 0 3px 0 6px;
  padding-left: 27px;
  outline: 3px solid #f96d00;
  z-index: 1;
}
.dd-item.picked::before {
  content: '';
  position: absolute;
  left: -6px;
  top: 0;
  width: 3px;
  height: 24px;
  background: #5d80a6;
}
.dd-icon { position: absolute; left: 4px; top: 5px; line-height: 0; }
.dd-sep { height: 1px; margin: 2px 0 2px 33px; background: #222; }
.dd-key { position: absolute; left: 157px; }
.dd-sub {
  position: absolute;
  right: 9px;
  top: 8px;
  border-left: 4px solid #ddd;
  border-top: 4px solid transparent;
  border-bottom: 4px solid transparent;
}
.pointer { position: absolute; left: 521px; top: 177px; }

/* annotation */
.note-arrow { position: absolute; left: 1258px; top: 765px; }
.callout {
  position: absolute;
  left: 1316px;
  top: 793px;
  width: 135px;
  height: 58px;
  box-sizing: border-box;
  padding-top: 7px;
  background: #f96d00;
  border-radius: 4px;
  color: #fff;
  font: 21px/22px "Liberation Sans", sans-serif;
  text-align: center;
}
</style>
